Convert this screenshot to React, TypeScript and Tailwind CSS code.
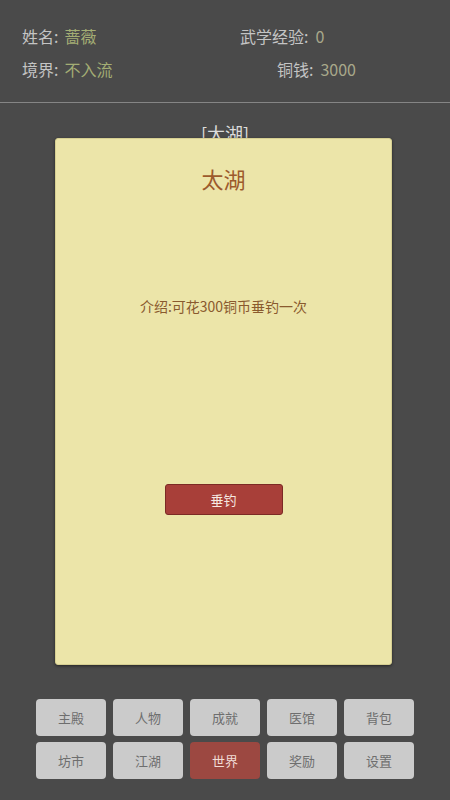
import * as React from "react";

const navItems = [
  "主殿",
  "人物",
  "成就",
  "医馆",
  "背包",
  "坊市",
  "江湖",
  "世界",
  "奖励",
  "设置",
];

export default function App() {
  const active = "世界";

  return (
    <div
      className="relative w-[450px] h-[800px] bg-[#4a4a4a] flex flex-col overflow-hidden"
      style={{ fontFamily: '"Noto Sans CJK SC", "Noto Sans", sans-serif' }}
    >
      {/* header stats */}
      <div className="flex flex-col gap-[11px] pt-[25px] pb-[22px] text-[16px] leading-[22px]">
        <div className="flex pl-[22px]">
          <div className="w-[218px] text-[#c4c4c4]">
            姓名:<span className="ml-[6px] text-[#a3ad74]">蔷薇</span>
          </div>
          <div className="text-[#c4c4c4]">
            武学经验:<span className="ml-[7px] text-[#a8a88a]">0</span>
          </div>
        </div>
        <div className="flex pl-[22px]">
          <div className="w-[255px] text-[#c4c4c4]">
            境界:<span className="ml-[6px] text-[#a3ad74]">不入流</span>
          </div>
          <div className="text-[#c4c4c4]">
            铜钱:<span className="ml-[7px] text-[#a8a88a]">3000</span>
          </div>
        </div>
      </div>
      <div className="h-[1px] bg-[#858585]" />

      <div className="text-center text-[#dcdcdc] text-[18px] leading-[24px] pt-[18px]">
        [太湖]
      </div>

      {/* bottom nav */}
      <div className="mt-auto grid grid-cols-5 gap-x-[7px] gap-y-[6px] px-[36px] pb-[21px]">
        {navItems.map((item) => (
          <div
            key={item}
            className={`h-[37px] flex items-center justify-center rounded-[4px] text-[13px] ${
              item === active
                ? "bg-[#9c4841] text-[#f1dcd6]"
                : "bg-[#cbcbcb] text-[#6e6e6e]"
            }`}
          >
            {item}
          </div>
        ))}
      </div>

      {/* modal */}
      <div className="absolute left-[55px] top-[138px] w-[337px] h-[527px] bg-[#ece5a9] rounded-[3px] border border-[#d6cf92] shadow-[0_1px_3px_rgba(0,0,0,0.5)] flex flex-col items-center">
        <div className="mt-[24px] text-[22px] leading-[30px] text-[#9c5a2c]">
          太湖
        </div>
        <div className="mt-[103px] text-[14px] leading-[20px] text-[#8a5a2e]">
          介绍:可花300铜币垂钓一次
        </div>
        <div className="mt-[168px] w-[118px] h-[31px] flex items-center justify-center bg-[#a83f39] border border-[#7c2a25] rounded-[3px] text-[13px] text-[#f6e8e2]">
          垂钓
        </div>
      </div>
    </div>
  );
}
